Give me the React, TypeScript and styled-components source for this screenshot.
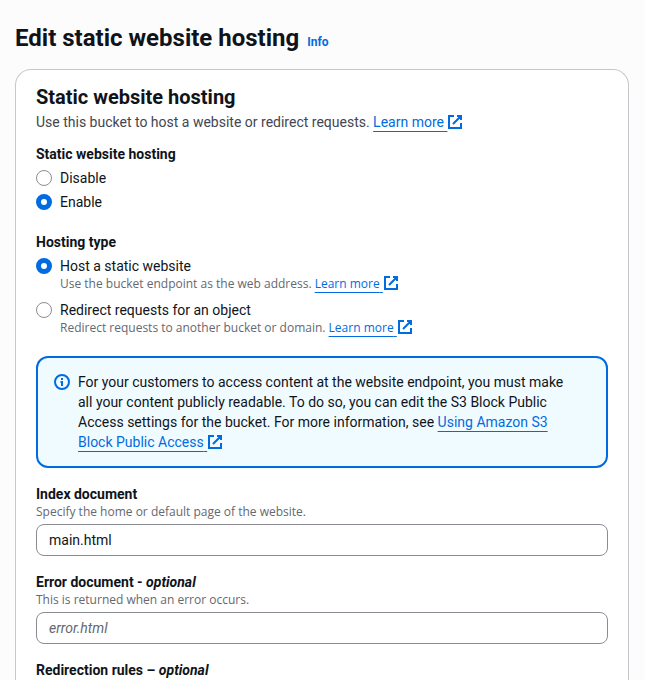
import React, { useState } from "react";
import styled, { createGlobalStyle, css } from "styled-components";

const blue = "#006ce0";
const ink = "#0f141a";

const GlobalStyle = createGlobalStyle`
  * { box-sizing: border-box; }
  body {
    margin: 0;
    background: #fcfcfd;
    color: ${ink};
    font-family: Roboto, "Noto Sans", sans-serif;
    font-size: 14px;
    line-height: 20px;
  }
`;

const Page = styled.main`
  display: flex;
  flex-direction: column;
  gap: 16px;
  min-height: 100vh;
  padding: 23px 16px 0 15px;
`;

const PageHeader = styled.header`
  display: flex;
  align-items: baseline;
  gap: 8px;
`;

const PageTitle = styled.h1`
  margin: 0;
  font-size: 24px;
  line-height: 30px;
  font-weight: 700;
`;

const InfoLink = styled.a`
  color: ${blue};
  font-size: 12px;
  line-height: 16px;
  font-weight: 700;
  text-decoration: none;
`;

const Card = styled.section`
  display: flex;
  flex: 1;
  flex-direction: column;
  gap: 20px;
  padding: 15px 20px 0;
  border: 1px solid #c6c6cd;
  border-bottom: 0;
  border-radius: 16px 16px 0 0;
  background: #fff;
`;

const Intro = styled.div`
  display: flex;
  flex-direction: column;
  gap: 3px;
  margin-bottom: -8px;
`;

const CardTitle = styled.h2`
  margin: 0;
  font-size: 20px;
  line-height: 24px;
  font-weight: 700;
`;

const CardText = styled.p`
  margin: 0;
  color: #424650;
`;

const TextLink = styled.a`
  color: ${blue};
  text-decoration: underline;
  text-decoration-thickness: 1px;
  text-underline-offset: 4px;
`;

const LinkIcon = styled.svg`
  display: inline-block;
  width: 16px;
  height: 16px;
  margin-top: -4px;
  vertical-align: -3px;
  fill: none;
  stroke: ${blue};
  stroke-width: 2;
`;

const labelText = css`
  font-size: 14px;
  line-height: 20px;
  font-weight: 700;
`;

const Group = styled.fieldset`
  display: block;
  min-width: 0;
  margin: 0;
  padding: 0;
  border: 0;
`;

const Legend = styled.legend`
  ${labelText}
  padding: 0;
  margin-bottom: 4px;
`;

const Options = styled.div<{ $gap: number }>`
  display: flex;
  flex-direction: column;
  gap: ${(p) => p.$gap}px;
`;

const Option = styled.div`
  display: grid;
  grid-template-columns: 16px 1fr;
  column-gap: 8px;
  align-items: center;
`;

const Radio = styled.input`
  appearance: none;
  width: 16px;
  height: 16px;
  margin: 0;
  border: 1px solid #8c8c94;
  border-radius: 50%;
  background: #fff;
  &:checked {
    border: 5px solid ${blue};
  }
`;

const Hint = styled.p`
  grid-column: 2;
  margin: 0;
  color: #656871;
  font-family: "Open Sans", "Noto Sans", sans-serif;
  font-size: 12px;
  line-height: 16px;
`;

const Alert = styled.div`
  display: flex;
  gap: 8px;
  padding: 14px 16px;
  border: 2px solid ${blue};
  border-radius: 12px;
  background: #f0fbff;
`;

const AlertIcon = styled.svg`
  flex: none;
  width: 16px;
  height: 16px;
  margin-top: 2px;
  fill: none;
  stroke: ${blue};
  stroke-width: 2;
`;

const AlertText = styled.p`
  margin: 0;
  padding-right: 16px;
`;

const Field = styled.div`
  display: flex;
  flex-direction: column;
  margin-top: -4px;
`;

const Label = styled.label`
  ${labelText}
`;

const FieldHeading = styled.h3`
  ${labelText}
  margin: 0;
`;

const TextInput = styled.input`
  width: 100%;
  height: 32px;
  margin-top: 4px;
  padding: 0 12px;
  border: 1px solid #8c8c94;
  border-radius: 8px;
  background: #fff;
  color: ${ink};
  font: inherit;
  &::placeholder {
    color: #656871;
    font-style: italic;
    opacity: 1;
  }
`;

function ExternalLink({ children }: { children: React.ReactNode }) {
  return (
    <>
      <TextLink href="#">{children} </TextLink>
      <LinkIcon viewBox="0 0 16 16" aria-hidden="true">
        <path d="M10 2h4v4M6 10l8-8M14 9.048V14H2V2h5" />
      </LinkIcon>
    </>
  );
}

type RadioOptionProps = {
  id: string;
  name: string;
  label: string;
  checked: boolean;
  onSelect: () => void;
  children?: React.ReactNode;
};

function RadioOption({ id, name, label, checked, onSelect, children }: RadioOptionProps) {
  return (
    <Option>
      <Radio type="radio" id={id} name={name} checked={checked} onChange={onSelect} />
      <label htmlFor={id}>{label}</label>
      {children && <Hint>{children}</Hint>}
    </Option>
  );
}

export default function App() {
  const [enabled, setEnabled] = useState(true);
  const [type, setType] = useState("host");
  const [indexDoc, setIndexDoc] = useState("main.html");
  const [errorDoc, setErrorDoc] = useState("");

  return (
    <>
      <GlobalStyle />
      <Page>
        <PageHeader>
          <PageTitle>Edit static website hosting</PageTitle>
          <InfoLink href="#">Info</InfoLink>
        </PageHeader>
        <Card>
          <Intro>
            <CardTitle>Static website hosting</CardTitle>
            <CardText>
              Use this bucket to host a website or redirect requests. <ExternalLink>Learn more</ExternalLink>
            </CardText>
          </Intro>
          <Group>
            <Legend>Static website hosting</Legend>
            <Options $gap={4}>
              <RadioOption id="disable" name="hosting" label="Disable" checked={!enabled} onSelect={() => setEnabled(false)} />
              <RadioOption id="enable" name="hosting" label="Enable" checked={enabled} onSelect={() => setEnabled(true)} />
            </Options>
          </Group>
          <Group>
            <Legend>Hosting type</Legend>
            <Options $gap={8}>
              <RadioOption id="host" name="type" label="Host a static website" checked={type === "host"} onSelect={() => setType("host")}>
                Use the bucket endpoint as the web address. <ExternalLink>Learn more</ExternalLink>
              </RadioOption>
              <RadioOption id="redirect" name="type" label="Redirect requests for an object" checked={type === "redirect"} onSelect={() => setType("redirect")}>
                Redirect requests to another bucket or domain. <ExternalLink>Learn more</ExternalLink>
              </RadioOption>
            </Options>
          </Group>
          <Alert>
            <AlertIcon viewBox="0 0 16 16" aria-hidden="true">
              <circle cx="8" cy="8" r="7" />
              <path d="M8 12V8H6.5M8 6V4" />
            </AlertIcon>
            <AlertText>
              For your customers to access content at the website endpoint, you must make all your content publicly
              readable. To do so, you can edit the S3 Block Public Access settings for the bucket. For more
              information, see <ExternalLink>Using Amazon S3 Block Public Access</ExternalLink>
            </AlertText>
          </Alert>
          <Field>
            <Label htmlFor="index-document">Index document</Label>
            <Hint id="index-hint">Specify the home or default page of the website.</Hint>
            <TextInput id="index-document" aria-describedby="index-hint" value={indexDoc} onChange={(e) => setIndexDoc(e.target.value)} />
          </Field>
          <Field>
            <Label htmlFor="error-document">
              Error document - <em>optional</em>
            </Label>
            <Hint id="error-hint">This is returned when an error occurs.</Hint>
            <TextInput id="error-document" aria-describedby="error-hint" placeholder="error.html" value={errorDoc} onChange={(e) => setErrorDoc(e.target.value)} />
          </Field>
          <Field>
            <FieldHeading>
              Redirection rules – <em>optional</em>
            </FieldHeading>
          </Field>
        </Card>
      </Page>
    </>
  );
}
